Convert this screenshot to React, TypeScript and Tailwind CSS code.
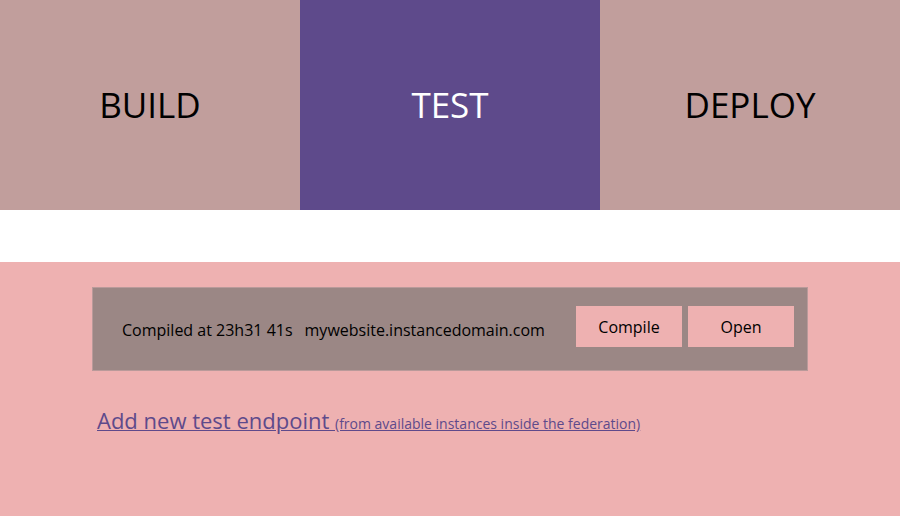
export default function App() {
  const font = { fontFamily: '"Open Sans", sans-serif' };
  return (
    <div style={font} className="w-[900px] h-[516px] flex flex-col bg-white">
      <div className="flex h-[210px]">
        <div className="w-[300px] flex items-center justify-center bg-[#c19e9c] text-black text-[35px]">BUILD</div>
        <div className="w-[300px] flex items-center justify-center bg-[#5e4a8b] text-white text-[35px]">TEST</div>
        <div className="w-[300px] flex items-center justify-center bg-[#c19e9c] text-black text-[35px]">DEPLOY</div>
      </div>
      <div className="h-[52px]" />
      <div className="flex-1 bg-[#eeb1b1] pt-[25px]">
        <div className="ml-[92px] w-[716px] h-[84px] bg-[#9b8785] border border-[#b99a9a] flex items-start pl-[29px] pr-[13px]">
          <span className="text-[16px] text-black mt-[30px]">Compiled at 23h31 41s</span>
          <span className="text-[16px] text-black ml-[12px] mt-[30px]">mywebsite.instancedomain.com</span>
          <div className="ml-auto flex gap-[6px] mt-[18px]">
            <button className="w-[106px] h-[41px] bg-[#eeb1b1] text-[16px] text-black">Compile</button>
            <button className="w-[106px] h-[41px] bg-[#eeb1b1] text-[16px] text-black">Open</button>
          </div>
        </div>
        <div className="ml-[97px] mt-[33px] text-[#5e4a8b] underline">
          <span className="text-[22px]">Add new test endpoint </span>
          <span className="text-[14px]">(from available instances inside the federation)</span>
        </div>
      </div>
    </div>
  );
}
